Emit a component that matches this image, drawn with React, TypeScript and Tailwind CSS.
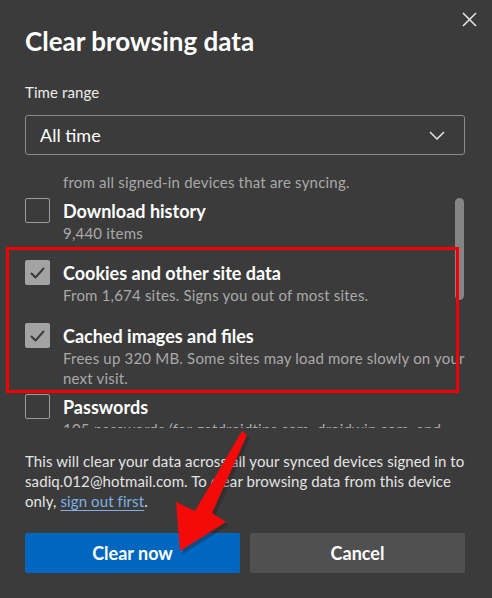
import React from 'react';

type Item = {
  title: string;
  lines: string[];
  checked: boolean;
  height: string;
};

const items: Item[] = [
  {
    title: 'Download history',
    lines: ['9,440 items'],
    checked: false,
    height: 'h-[62px]',
  },
  {
    title: 'Cookies and other site data',
    lines: ['From 1,674 sites. Signs you out of most sites.'],
    checked: true,
    height: 'h-[63px]',
  },
  {
    title: 'Cached images and files',
    lines: [
      'Frees up 320 MB. Some sites may load more slowly on your',
      'next visit.',
    ],
    checked: true,
    height: 'h-[71px]',
  },
  {
    title: 'Passwords',
    lines: ['105 passwords (for getdroidtips.com, droidwin.com, and'],
    checked: false,
    height: 'h-[62px]',
  },
];

function Checkbox({ checked }: { checked: boolean }) {
  if (checked) {
    return (
      <div className="flex h-[25px] w-[25px] shrink-0 items-center justify-center rounded-[2px] bg-[#a3a3a3]">
        <svg width="15" height="12" viewBox="0 0 15 12" fill="none">
          <path
            d="M1.5 6.5 L5.5 10.5 L13.5 1.5"
            stroke="#3a3a3a"
            strokeWidth="2"
            strokeLinecap="round"
            strokeLinejoin="round"
          />
        </svg>
      </div>
    );
  }
  return (
    <div className="h-[25px] w-[25px] shrink-0 rounded-[2px] border border-[#9c9c9c]" />
  );
}

function Row({ item }: { item: Item }) {
  return (
    <div className={`flex items-start gap-[13px] ${item.height}`}>
      <Checkbox checked={item.checked} />
      <div className="mt-[1px] flex flex-col">
        <span className="text-[18px] font-bold leading-[24px] text-white">
          {item.title}
        </span>
        {item.lines.map((line) => (
          <span
            key={line}
            className="whitespace-nowrap text-[15px] leading-[20px] tracking-[0.2px] text-[#a9a9a9]"
          >
            {line}
          </span>
        ))}
      </div>
    </div>
  );
}

export default function App() {
  return (
    <div
      className="relative h-[598px] w-[492px] overflow-hidden bg-[#3b3b3b] text-white"
      style={{ fontFamily: 'Lato, "Open Sans", sans-serif' }}
    >
      <div className="flex flex-col pl-[25px] pr-[27px]">
        <div className="flex items-start justify-between">
          <h1 className="mt-[25px] text-[26px] font-bold leading-[32px] text-white">
            Clear browsing data
          </h1>
          <svg
            className="mr-[-12px] mt-[12px]"
            width="15"
            height="15"
            viewBox="0 0 15 15"
            fill="none"
          >
            <path
              d="M1 1 L14 14 M14 1 L1 14"
              stroke="#e8e8e8"
              strokeWidth="1.5"
            />
          </svg>
        </div>

        <span className="mt-[25px] text-[15px] leading-[20px] tracking-[0.1px] text-[#ececec]">
          Time range
        </span>

        <div className="mt-[13px] flex h-[40px] items-center justify-between rounded-[3px] border border-[#8a8a8a] pl-[14px] pr-[19px]">
          <span className="text-[18px] text-white">All time</span>
          <svg width="16" height="9" viewBox="0 0 16 9" fill="none">
            <path
              d="M1 1 L8 8 L15 1"
              stroke="#e6e6e6"
              strokeWidth="1.5"
            />
          </svg>
        </div>

        <div className="relative mt-[17px] h-[256px] overflow-hidden">
          <div className="pl-[38px] text-[15px] leading-[20px] tracking-[0.2px] text-[#a9a9a9]">
            from all signed-in devices that are syncing.
          </div>
          <div className="mt-[6px] flex flex-col">
            {items.map((item) => (
              <Row key={item.title} item={item} />
            ))}
          </div>
          <div className="absolute right-[1px] top-[26px] h-[102px] w-[9px] rounded-full bg-[#858585]" />
        </div>

        <p className="mt-[23px] whitespace-nowrap text-[15px] leading-[20px] tracking-[0.1px] text-[#e4e4e4]">
          This will clear your data across all your synced devices signed in to
          <br />
          sadiq.012@hotmail.com. To clear browsing data from this device
          <br />
          only,{' '}
          <a className="text-[#7fb0e3] underline underline-offset-[3px]">
            sign out first
          </a>
          .
        </p>

        <div className="mt-[22px] flex gap-[10px]">
          <button className="flex h-[40px] flex-1 items-center justify-center rounded-[2px] bg-[#0067c0] text-[18px] font-bold text-white">
            Clear now
          </button>
          <button className="flex h-[40px] flex-1 items-center justify-center rounded-[2px] bg-[#505050] text-[18px] font-bold text-white">
            Cancel
          </button>
        </div>
      </div>

      <div className="pointer-events-none absolute left-[6px] top-[247px] h-[146px] w-[453px] border-[3px] border-[#f20000]" />

      <svg
        className="pointer-events-none absolute left-0 top-0"
        width="492"
        height="598"
        viewBox="0 0 492 598"
      >
        <polygon
          points="243,432 248,436 213,514 227,523 181,552 177,503 196,512"
          fill="#2a1a1a"
          opacity="0.35"
          transform="translate(2 2)"
        />
        <polygon
          points="242,431 247,435 212,513 226,522 180,551 176,502 195,511"
          fill="#f50a0a"
        />
      </svg>
    </div>
  );
}
